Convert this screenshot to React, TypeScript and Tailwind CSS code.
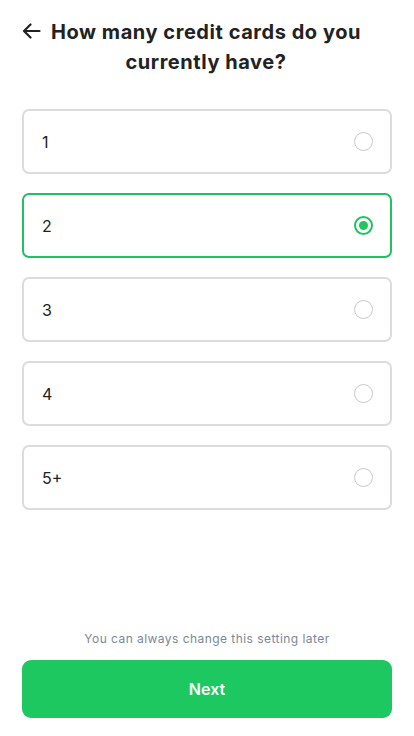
import { useState } from "react";

const opciones = ["1", "2", "3", "4", "5+"];

export default function App() {
    const [elegida, setElegida] = useState("2");
    return (
        <div
            className="w-[414px] h-[736px] bg-white flex flex-col px-[22px]"
            style={{ fontFamily: "Inter, 'Noto Sans', sans-serif" }}
        >
            {/* Cabecera */}
            <div className="flex flex-row items-start pt-[17px]">
                <button className="w-[22px] h-[28px] flex items-center shrink-0">
                    <svg width="19" height="16" viewBox="0 0 19 16" fill="none" stroke="#222" strokeWidth="2.2" strokeLinecap="round" strokeLinejoin="round">
                        <path d="M17.5 8H2M8.5 1.5L2 8l6.5 6.5" />
                    </svg>
                </button>
                <h1 className="flex-1 text-center text-[20px] leading-[30px] font-bold text-[#222] tracking-[0.55px]">
                    How many credit cards do you currently have?
                </h1>
                <div className="w-[24px] shrink-0" />
            </div>

            {/* Opciones */}
            <div className="flex flex-col gap-[19px] mt-[32px]">
                {opciones.map((op) => {
                    const activa = op === elegida;
                    return (
                        <button
                            key={op}
                            onClick={() => setElegida(op)}
                            className={
                                activa
                                    ? "h-[65px] rounded-[7px] border-2 border-[#22c063] flex flex-row items-center justify-between pl-[18px] pr-[17px]"
                                    : "h-[65px] rounded-[7px] border-2 border-[#dcdcdc] flex flex-row items-center justify-between pl-[18px] pr-[17px]"
                            }
                        >
                            <span className="text-[16px] text-[#222]">{op}</span>
                            {activa ? (
                                <span className="w-[19px] h-[19px] rounded-full border-2 border-[#22c063] flex items-center justify-center">
                                    <span className="w-[9px] h-[9px] rounded-full bg-[#1ec760]" />
                                </span>
                            ) : (
                                <span className="w-[19px] h-[19px] rounded-full border border-[#c8c8c8]" />
                            )}
                        </button>
                    );
                })}
            </div>

            <div className="flex-1" />

            {/* Pie */}
            <p className="text-center text-[12px] text-[#7b8799] tracking-[0.45px] mb-[12px]">
                You can always change this setting later
            </p>
            <button className="h-[58px] rounded-[9px] bg-[#1ec861] text-white text-[16px] font-semibold mb-[18px]">
                Next
            </button>
        </div>
    );
}
